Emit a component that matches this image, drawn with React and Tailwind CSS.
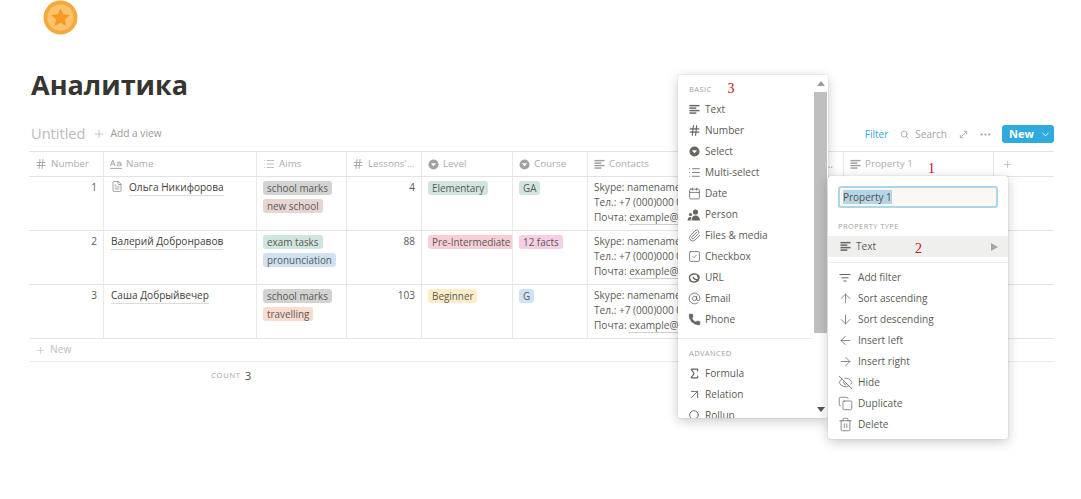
import React from "react";
import { Hash, Paperclip, AtSign, Phone, Sigma, ArrowUpRight, Search, ArrowUp, ArrowDown, ArrowLeft, ArrowRight, EyeOff, Copy, Trash2, SquareCheck, Calendar, Plus, ChevronDown, FileText, Ellipsis, MoveDiagonal, List } from "lucide-react";

const grid = "grid grid-cols-[75px_153px_90px_75px_91px_75px_173px_83px_150px_60px]";
const cellB = "border-r border-[#e9e9e7] overflow-hidden";

const TextIcon = ({ c = "" }) => (
  <svg viewBox="0 0 12 12" className={"w-[11px] h-[11px] shrink-0 " + c} fill="currentColor">
    <rect x="0.5" y="1" width="11" height="1.6" /><rect x="0.5" y="3.7" width="7.5" height="1.6" />
    <rect x="0.5" y="6.4" width="11" height="1.6" /><rect x="0.5" y="9.1" width="7.5" height="1.6" />
  </svg>
);
const SelectIcon = ({ c = "" }) => (
  <svg viewBox="0 0 12 12" className={"w-[11px] h-[11px] shrink-0 " + c}>
    <circle cx="6" cy="6" r="5.5" fill="currentColor" /><path d="M3.2 4.7h5.6L6 8.3z" fill="#fff" />
  </svg>
);
const AaIcon = () => (
  <svg viewBox="0 0 12 10" className="w-[12px] h-[10px] shrink-0 text-[#a8a7a4]" fill="none" stroke="currentColor" strokeWidth="1">
    <path d="M.5 7 2.8 1 5 7M1.2 5h3.2" /><path d="M7 3.4c3-1 4 0 4 1V7M11 5c-3-.6-4 0-4 1s2.5 1.2 4 0" /><path d="M0 9.4h12" />
  </svg>
);
const PersonIcon = ({ c = "" }) => (
  <svg viewBox="0 0 14 12" className={"w-[14px] h-[12px] shrink-0 " + c} fill="currentColor">
    <circle cx="8.5" cy="3" r="2.6" /><path d="M4.5 11.5c0-3 1.5-5 4-5s4.5 2 4.5 5z" /><circle cx="3.5" cy="5.5" r="1.6" /><path d="M.5 11.5c0-2 1-3.6 3-3.6 .4 0 .7 0 1 .2-.6 1-.9 2.2-.9 3.4z" />
  </svg>
);
const UrlIcon = ({ c = "" }) => (
  <svg viewBox="0 0 12 12" className={"w-[12px] h-[12px] shrink-0 " + c} fill="none" stroke="currentColor" strokeWidth="1.4">
    <path d="M3 8.5C1 7.5.8 4 3 2.8 5.5 1.3 10 2 11 4.6c.6 2-1 3.4-3 3-1.700-.3-3-1.600-2.600-2.800M9 3.500c2 1 2.200 4.500 0 5.700-2.500 1.500-6.500.8-7.500-1.500" />
  </svg>
);
const H = ({ icon, label, pl = "pl-[6px]" }) => (
  <div className={`${cellB} flex items-center gap-[4px] ${pl} text-[#adaca9] text-[9.8px] whitespace-nowrap`}>{icon}<span>{label}</span></div>
);
const Tag = ({ bg, children }) => (
  <div className={`w-fit ${bg} rounded-[3px] px-[4px] h-[14px] leading-[14px] text-[9.9px] text-[#5c5b57] whitespace-nowrap`}>{children}</div>
);
const ic = "w-[12px] h-[12px] shrink-0 text-[#a3a29f]";

const rows = [
  { n: "1", name: "Ольга Никифорова", doc: true, aims: [["school marks", "bg-[#d3d3d2]"], ["new school", "bg-[#e6d6cf]"]], l: "4", level: ["Elementary", "bg-[#cfe5dd]"], course: ["GA", "bg-[#cfe5dd]"] },
  { n: "2", name: "Валерий Добронравов", aims: [["exam tasks", "bg-[#cfe5dd]"], ["pronunciation", "bg-[#cfe1f3]"]], l: "88", level: ["Pre-Intermediate", "bg-[#f8cfd5]"], course: ["12 facts", "bg-[#f5cfe5]"] },
  { n: "3", name: "Саша Добрыйвечер", aims: [["school marks", "bg-[#d3d3d2]"], ["travelling", "bg-[#f9dccf]"]], l: "103", level: ["Beginner", "bg-[#fdecc8]"], course: ["G", "bg-[#cfe1f3]"] },
];

const Row = ({ r }) => (
  <div className={`${grid} h-[54px] border-b border-[#e3e3e1] text-[10.1px] text-[#5c5b57]`}>
    <div className={`${cellB} text-right pr-[6px] pt-[3px] leading-[15px]`}>{r.n}</div>
    <div className={`${cellB} pl-[7px] pt-[2px] flex items-start gap-[6px]`}>
      {r.doc && <FileText className="w-[12px] h-[13px] mt-[1px] text-[#777] shrink-0" strokeWidth={1.3} />}
      <span className="border-b border-[#dcdcda] leading-[16px] text-[#3f3e3a] whitespace-nowrap">{r.name}</span>
    </div>
    <div className={`${cellB} pl-[6px] pt-[4px] flex flex-col gap-[4px]`}>
      {r.aims.map(([t, b]) => <Tag key={t} bg={b}>{t}</Tag>)}
    </div>
    <div className={`${cellB} text-right pr-[6px] pt-[3px] leading-[15px]`}>{r.l}</div>
    <div className={`${cellB} pl-[6px] pt-[4px]`}><Tag bg={r.level[1]}>{r.level[0]}</Tag></div>
    <div className={`${cellB} pl-[6px] pt-[4px]`}><Tag bg={r.course[1]}>{r.course[0]}</Tag></div>
    <div className={`${cellB} pl-[6px] pt-[3px] leading-[15px] whitespace-nowrap`}>
      <div>Skype: namename</div>
      <div>Тел.: +7 (000)000 00 00</div>
      <div>Почта: <span className="border-b border-[#cfcfcd]">example@mail.ru</span></div>
    </div>
    <div className={cellB}></div>
    <div className={cellB}></div>
    <div></div>
  </div>
);

const MI = ({ icon, label, gap = "mr-[3px]" }) => (
  <div className={`h-[21px] flex items-center text-[10.1px] text-[#5c5b57] whitespace-nowrap`}>
    <div className={`w-[16px] flex justify-center ${gap} text-[#66655f]`}>{icon}</div>{label}
  </div>
);
const k = "w-[13px] h-[13px] shrink-0";
const a = "w-[15px] h-[15px] shrink-0";

export default function App() {
  return (
    <div className="relative w-[1081px] h-[499px] overflow-hidden bg-white font-['Open_Sans','Noto_Sans',sans-serif]">
      <div className="pl-[43px] h-[35px]">
        <svg viewBox="0 0 36 36" className="w-[35px] h-[35px]">
          <circle cx="18" cy="18" r="17.500" fill="#f6a93b" />
          <circle cx="18" cy="18" r="13.500" fill="#fbc46c" />
          <path d="M18 8.500l2.900 6.200 6.700.8-5 4.600 1.400 6.700L18 23.400l-6 3.400 1.400-6.700-5-4.600 6.700-.8z" fill="#f59a23" />
        </svg>
      </div>
      <h1 className="ml-[31px] mt-[32px] h-[36px] leading-[36px] text-[27px] font-bold text-[#37352f]">Аналитика</h1>

      <div className="ml-[29px] w-[1025px] mt-[17px] h-[28px] flex items-center">
        <span className="ml-[2px] text-[14.600px] text-[#bdbcba]">Untitled</span>
        <Plus className="ml-[8px] w-[12px] h-[12px] text-[#a8a7a4]" strokeWidth={1.300} />
        <span className="ml-[5px] text-[10.200px] text-[#9b9a97]">Add a view</span>
        <div className="ml-auto flex items-center">
          <span className="text-[10px] text-[#2eaadc]">Filter</span>
          <Search className="ml-[12px] w-[9px] h-[9px] text-[#9b9a97]" strokeWidth={2} />
          <span className="ml-[6px] text-[10px] text-[#a3a29f]">Search</span>
          <MoveDiagonal className="ml-[11px] w-[11px] h-[11px] text-[#9b9a97]" strokeWidth={1.500} />
          <Ellipsis className="ml-[10px] w-[13px] h-[13px] text-[#9b9a97]" strokeWidth={2} />
          <div className="ml-[10px] w-[52px] h-[18px] rounded-[3px] bg-[#2eaadc] text-white flex items-center text-[11px] font-bold">
            <span className="ml-[7px]">New</span>
            <ChevronDown className="ml-auto mr-[3px] w-[11px] h-[11px]" strokeWidth={2} />
          </div>
        </div>
      </div>

      <div className="ml-[29px] w-[1025px] mt-[3px]">
        <div className={`${grid} h-[26px] border-y border-[#e3e3e1]`}>
          <H pl="pl-[6px]" icon={<Hash className={ic} strokeWidth={1.800} />} label="Number" />
          <H icon={<AaIcon />} label="Name" />
          <H icon={<List className={ic} strokeWidth={1.400} />} label="Aims" />
          <H pl="pl-[5px]" icon={<Hash className={ic} strokeWidth={1.800} />} label="Lessons'..." />
          <H icon={<SelectIcon c="text-[#a3a29f]" />} label="Level" />
          <H icon={<SelectIcon c="text-[#a3a29f]" />} label="Course" />
          <H icon={<TextIcon c="text-[#a3a29f]" />} label="Contacts" />
          <div className={`${cellB} flex items-center justify-end pr-[10px] text-[#a3a29f] text-[10px]`}>...</div>
          <H icon={<TextIcon c="text-[#a3a29f]" />} label="Property 1" />
          <div className="flex items-center pl-[8px]"><Plus className="w-[11px] h-[11px] text-[#a8a7a4]" strokeWidth={1.300} /></div>
        </div>
        {rows.map(r => <Row key={r.n} r={r} />)}
        <div className="h-[23px] border-b border-[#ececea] flex items-center pl-[6px] gap-[4px] text-[10.200px] text-[#bdbcba]">
          <Plus className="w-[11px] h-[11px]" strokeWidth={1.300} /> New
        </div>
        <div className="h-[27px] pl-[182px] flex items-center gap-[4px]">
          <span className="text-[7.500px] tracking-[0.8px] text-[#a3a29f]">COUNT</span>
          <span className="text-[11.500px] text-[#55544f]">3</span>
        </div>
      </div>

      {/* Type menu */}
      <div className="absolute left-[678px] top-[75px] w-[150px] h-[343px] bg-white rounded-[3px] shadow-[0_0_0_1px_rgba(15,15,15,0.04),0_3px_12px_rgba(15,15,15,0.22)] overflow-hidden flex">
        <div className="w-[135px] overflow-hidden">
          <div className="pl-[11px] pr-[9px] pt-[5px] h-[18px] flex items-center gap-[16px]">
            <span className="text-[7.500px] tracking-[0.4px] text-[#a3a29f] mt-[6px]">BASIC</span>
            <span className="font-['Liberation_Serif',serif] text-[14px] text-[#c8101a] mt-[3px]">3</span>
          </div>
          <div className="pl-[8px] pt-[6px]">
            <MI icon={<TextIcon />} label="Text" />
            <MI icon={<Hash className={k} strokeWidth={2} />} label="Number" />
            <MI icon={<SelectIcon />} label="Select" />
            <MI icon={<List className={k} strokeWidth={1.500} />} label="Multi-select" />
            <MI icon={<Calendar className={k} strokeWidth={1.500} />} label="Date" />
            <MI icon={<PersonIcon />} label="Person" />
            <MI icon={<Paperclip className={k} strokeWidth={1.500} />} label="Files & media" />
            <MI icon={<SquareCheck className={k} strokeWidth={1.500} />} label="Checkbox" />
            <MI icon={<UrlIcon />} label="URL" />
            <MI icon={<AtSign className={k} strokeWidth={1.500} />} label="Email" />
            <MI icon={<Phone className={k} fill="currentColor" strokeWidth={1} />} label="Phone" />
          </div>
          <div className="mt-[8px] border-t border-[#ececea]"></div>
          <div className="pl-[11px] pt-[9px] text-[7.500px] tracking-[0.4px] text-[#a3a29f] h-[21px]">ADVANCED</div>
          <div className="pl-[8px] pt-[3px]">
            <MI icon={<Sigma className={k} strokeWidth={2.200} />} label="Formula" />
            <MI icon={<ArrowUpRight className={a} strokeWidth={1.500} />} label="Relation" />
            <MI icon={<Search className={k} strokeWidth={1.600} />} label="Rollup" />
          </div>
        </div>
        <div className="w-[15px] flex flex-col items-center bg-white">
          <svg viewBox="0 0 8 5" className="w-[8px] h-[5px] mt-[6px] text-[#9b9a97]" fill="currentColor"><path d="M4 0l4 5H0z" /></svg>
          <div className="w-[13px] h-[241px] mt-[6px] bg-[#bfbfbf]"></div>
          <svg viewBox="0 0 8 5" className="w-[8px] h-[5px] mt-auto mb-[6px] text-[#555]" fill="currentColor"><path d="M4 5l4-5H0z" /></svg>
        </div>
      </div>

      {/* Property menu */}
      <div className="absolute left-[828px] top-[176px] w-[180px] h-[263px] bg-white rounded-[3px] shadow-[0_0_0_1px_rgba(15,15,15,0.04),0_3px_12px_rgba(15,15,15,0.22)]">
        <div className="mx-[10px] mt-[10px] h-[22px] pb-[1px] border-2 border-[#a9d7e8] rounded-[3px] bg-[#fbf7f3] flex items-center pl-[3px] text-[10px] text-[#55544f]">
          <span className="bg-[#b4d5e6] leading-[14px]">Property 1</span>
        </div>
        <div className="pl-[10px] mt-[12px] h-[12px] leading-[12px] text-[7.500px] tracking-[0.4px] text-[#a3a29f]">PROPERTY TYPE</div>
        <div className="mt-[4px] h-[21px] bg-[#efefee] flex items-center pl-[12px] text-[10.100px] text-[#5c5b57]">
          <TextIcon c="text-[#66655f]" />
          <span className="ml-[5px]">Text</span>
          <svg viewBox="0 0 7 8" className="ml-auto mr-[10px] w-[7px] h-[8px] text-[#a8a7a4]" fill="currentColor"><path d="M0 0l7 4-7 4z" /></svg>
        </div>
        <div className="mt-[5px] border-t border-[#ececea]"></div>
        <div className="pl-[9px] pt-[4px]">
          <MI gap="mr-[5px]" icon={<svg viewBox="0 0 12 10" className="w-[12px] h-[10px]" fill="none" stroke="currentColor" strokeWidth="1"><path d="M.5 1.500h11M2.500 4.800h7M4.500 8h3" /></svg>} label="Add filter" />
          <MI gap="mr-[5px]" icon={<ArrowUp className={a} strokeWidth={1.200} />} label="Sort ascending" />
          <MI gap="mr-[5px]" icon={<ArrowDown className={a} strokeWidth={1.200} />} label="Sort descending" />
          <MI gap="mr-[5px]" icon={<ArrowLeft className={a} strokeWidth={1.200} />} label="Insert left" />
          <MI gap="mr-[5px]" icon={<ArrowRight className={a} strokeWidth={1.200} />} label="Insert right" />
          <MI gap="mr-[5px]" icon={<EyeOff className={a} strokeWidth={1.200} />} label="Hide" />
          <MI gap="mr-[5px]" icon={<Copy className={a} strokeWidth={1.200} />} label="Duplicate" />
          <MI gap="mr-[5px]" icon={<Trash2 className={a} strokeWidth={1.200} />} label="Delete" />
        </div>
      </div>

      <span className="absolute left-[928px] top-[161px] font-['Liberation_Serif',serif] text-[14px] leading-[16px] text-[#c8101a]">1</span>
      <span className="absolute left-[915px] top-[241px] font-['Liberation_Serif',serif] text-[14px] leading-[16px] text-[#c8101a]">2</span>
    </div>
  );
}
